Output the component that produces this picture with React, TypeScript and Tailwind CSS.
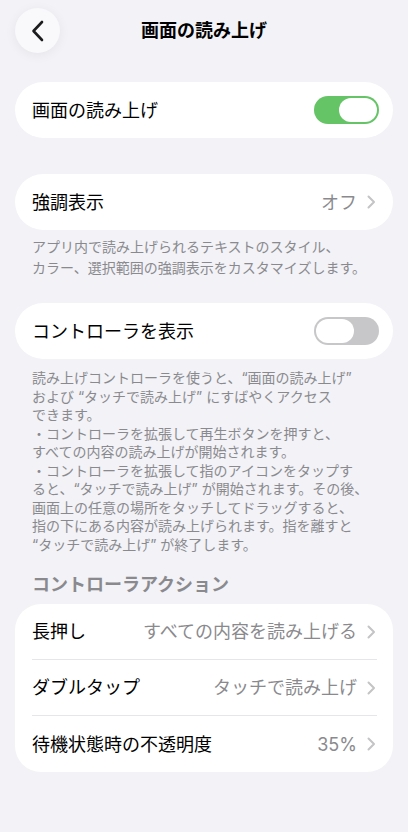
import React from 'react';

const font = 'font-["Inter","Noto_Sans_CJK_JP",sans-serif]';

const Chevron = () => (
  <svg width="9" height="14" viewBox="0 0 9 14" className="shrink-0">
    <path d="M1.5 1.5 7 7l-5.5 5.5" fill="none" stroke="#c4c4c7" strokeWidth="2" strokeLinecap="round" strokeLinejoin="round" />
  </svg>
);

const Toggle = ({ on }: { on: boolean }) => (
  <div
    className={`flex h-[28px] w-[65px] items-center rounded-full p-[2px] ${
      on ? 'justify-end bg-[#65c466]' : 'justify-start bg-[#c7c7c9]'
    }`}
  >
    <div className="h-[24px] w-[38px] rounded-full bg-white" />
  </div>
);

const Card = ({ children, className = '' }: { children: React.ReactNode; className?: string }) => (
  <div className={`bg-white ${className}`}>{children}</div>
);

const Footnote = ({ lines, leading }: { lines: string[]; leading: string }) => (
  <p className={`px-[17px] text-[14px] text-[#8a8a8e] ${leading}`}>
    {lines.map((l, i) => (
      <span key={i} className="block whitespace-pre">
        {l}
      </span>
    ))}
  </p>
);

const actions = [
  { label: '長押し', value: 'すべての内容を読み上げる' },
  { label: 'ダブルタップ', value: 'タッチで読み上げ' },
  { label: '待機状態時の不透明度', value: '35%' },
];

export default function App() {
  return (
    <div className={`min-h-[832px] w-full bg-[#f2f2f7] px-[15px] text-black ${font}`}>
      {/* nav bar */}
      <div className="grid grid-cols-[45px_1fr_45px] items-center pt-[8px]">
        <button
          type="button"
          className="flex h-[45px] w-[45px] items-center justify-center rounded-full bg-[#f9f9fc] shadow-[0_2px_12px_rgba(0,0,0,0.06)]"
        >
          <svg width="14" height="22" viewBox="0 0 14 22">
            <path d="M11 2 2.5 11 11 20" fill="none" stroke="#1c1c1e" strokeWidth="2.6" strokeLinecap="round" strokeLinejoin="round" />
          </svg>
        </button>
        <h1 className="text-center text-[18px] font-semibold">画面の読み上げ</h1>
        <div />
      </div>

      <Card className="mt-[29px] flex h-[56px] items-center justify-between rounded-full pl-[17px] pr-[14px]">
        <span className="text-[18px]">画面の読み上げ</span>
        <Toggle on />
      </Card>

      <Card className="mt-[36px] flex h-[56px] items-center justify-between rounded-full pl-[17px] pr-[17px]">
        <span className="text-[18px]">強調表示</span>
        <span className="flex items-center gap-[10px] text-[18px] text-[#8a8a8e]">
          オフ
          <Chevron />
        </span>
      </Card>

      <div className="mt-[7px]">
        <Footnote
          leading="leading-[20.5px]"
          lines={['アプリ内で読み上げられるテキストのスタイル、', 'カラー、選択範囲の強調表示をカスタマイズします。']}
        />
      </div>

      <Card className="mt-[25px] flex h-[56px] items-center justify-between rounded-full pl-[17px] pr-[14px]">
        <span className="text-[18px]">コントローラを表示</span>
        <Toggle on={false} />
      </Card>

      <div className="mt-[10px]">
        <Footnote
          leading="leading-[18.5px]"
          lines={[
            '読み上げコントローラを使うと、“画面の読み上げ”',
            'および “タッチで読み上げ” にすばやくアクセス',
            'できます。',
            '・コントローラを拡張して再生ボタンを押すと、',
            'すべての内容の読み上げが開始されます。',
            '・コントローラを拡張して指のアイコンをタップす',
            'ると、“タッチで読み上げ” が開始されます。その後、',
            '画面上の任意の場所をタッチしてドラッグすると、',
            '指の下にある内容が読み上げられます。指を離すと',
            '“タッチで読み上げ” が終了します。',
          ]}
        />
      </div>

      <h2 className="mt-[19px] px-[17px] text-[18px] font-semibold leading-[24px] text-[#8a8a8e]">
        コントローラアクション
      </h2>

      <Card className="mt-[7px] rounded-[26px] pl-[17px] pr-[16px]">
        {actions.map((a, i) => (
          <div
            key={a.label}
            className={`flex h-[56px] items-center justify-between pr-[1px] ${
              i < actions.length - 1 ? 'border-b border-[#e5e5ea]' : ''
            }`}
          >
            <span className="text-[18px]">{a.label}</span>
            <span className="flex items-center gap-[10px] text-[18px] text-[#8a8a8e]">
              {a.value}
              <Chevron />
            </span>
          </div>
        ))}
      </Card>
    </div>
  );
}
